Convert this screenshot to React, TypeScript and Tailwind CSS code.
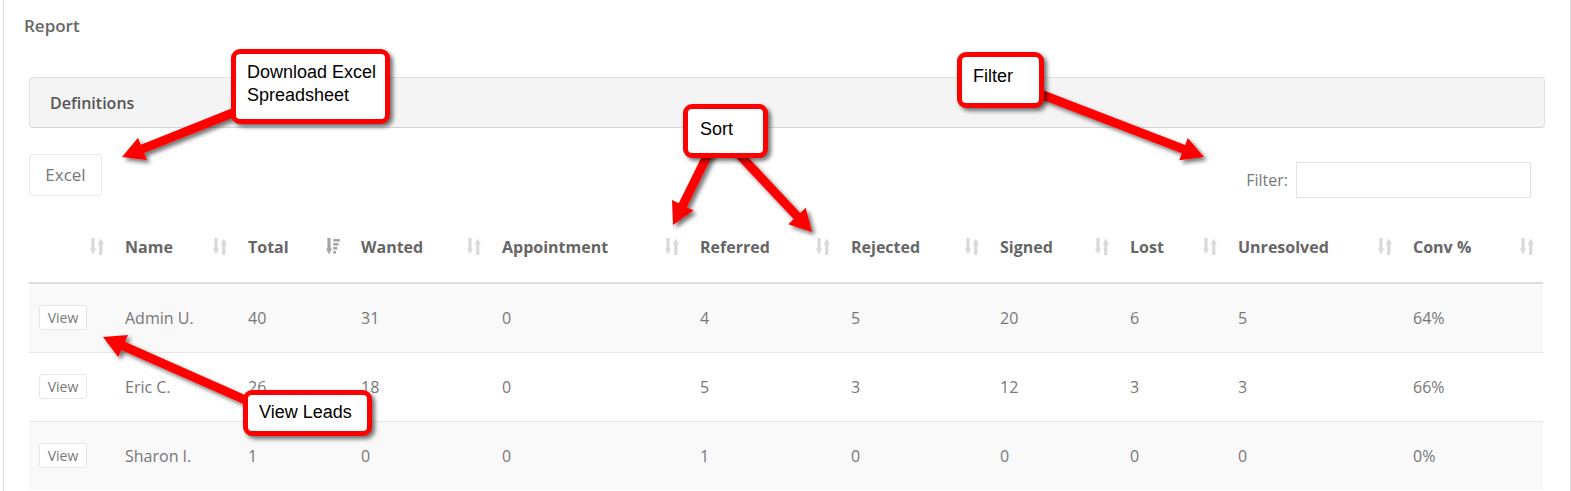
import React from 'react'

type Row = {
  name: string
  total: string
  wanted: string
  appointment: string
  referred: string
  rejected: string
  signed: string
  lost: string
  unresolved: string
  conv: string
}

const rows: Row[] = [
  { name: 'Admin U.', total: '40', wanted: '31', appointment: '0', referred: '4', rejected: '5', signed: '20', lost: '6', unresolved: '5', conv: '64%' },
  { name: 'Eric C.', total: '26', wanted: '18', appointment: '0', referred: '5', rejected: '3', signed: '12', lost: '3', unresolved: '3', conv: '66%' },
  { name: 'Sharon I.', total: '1', wanted: '0', appointment: '0', referred: '1', rejected: '0', signed: '0', lost: '0', unresolved: '0', conv: '0%' },
]

const columns: { label: string; key: keyof Row | null; width: string; active?: boolean }[] = [
  { label: '', key: null, width: 'w-[84px]' },
  { label: 'Name', key: 'name', width: 'w-[123px]' },
  { label: 'Total', key: 'total', width: 'w-[113px]', active: true },
  { label: 'Wanted', key: 'wanted', width: 'w-[141px]' },
  { label: 'Appointment', key: 'appointment', width: 'w-[198px]' },
  { label: 'Referred', key: 'referred', width: 'w-[151px]' },
  { label: 'Rejected', key: 'rejected', width: 'w-[149px]' },
  { label: 'Signed', key: 'signed', width: 'w-[130px]' },
  { label: 'Lost', key: 'lost', width: 'w-[108px]' },
  { label: 'Unresolved', key: 'unresolved', width: 'w-[175px]' },
  { label: 'Conv %', key: 'conv', width: 'w-[142px]' },
]

const SortIcon = ({ active }: { active?: boolean }) => {
  if (active) {
    return (
      <svg width="14" height="17" viewBox="0 0 14 17" className="shrink-0">
        <g fill="#a5a5a5">
          <rect x="1.4" y="0" width="3.2" height="11.5" />
          <polygon points="0,10.5 6,10.5 3,16.5" />
          <rect x="7.3" y="1" width="6.5" height="2.6" />
          <rect x="7.3" y="5" width="5.2" height="2.6" />
          <rect x="7.3" y="9" width="3.9" height="2.6" />
          <rect x="7.3" y="13" width="2.6" height="2.6" />
        </g>
      </svg>
    )
  }
  return (
    <svg width="14" height="17" viewBox="0 0 14 17" className="shrink-0">
      <g fill="#d9d9d9">
        <rect x="1.4" y="0" width="3.2" height="11.5" />
        <polygon points="0,10.5 6,10.5 3,16.5" />
        <polygon points="7.5,6.5 14,6.5 10.75,0.5" />
        <rect x="9.15" y="5.5" width="3.2" height="11.5" />
      </g>
    </svg>
  )
}

// callout arrows drawn on top of the screenshot
const arrowPoints = (x1: number, y1: number, x2: number, y2: number) => {
  const dx = x2 - x1
  const dy = y2 - y1
  const len = Math.hypot(dx, dy)
  const ux = dx / len
  const uy = dy / len
  const nx = -uy
  const ny = ux
  const w = 4.5
  const H = 12
  const L = 22
  const bx = x2 - ux * L
  const by = y2 - uy * L
  const pts = [
    [x1 + nx * w, y1 + ny * w],
    [bx + nx * w, by + ny * w],
    [bx + nx * H, by + ny * H],
    [x2, y2],
    [bx - nx * H, by - ny * H],
    [bx - nx * w, by - ny * w],
    [x1 - nx * w, y1 - ny * w],
  ]
  return pts.map((p) => `${p[0].toFixed(1)},${p[1].toFixed(1)}`).join(' ')
}

const arrows: [number, number, number, number][] = [
  [240, 110, 122, 157],
  [710, 150, 673, 225],
  [735, 150, 812, 232],
  [1035, 92, 1204, 157],
  [250, 402, 103, 337],
]

const Callout = ({ className, children }: { className: string; children: React.ReactNode }) => (
  <div
    className={`absolute rounded-[9px] border-[5px] border-[#ff0000] bg-white text-[18px] leading-[23px] text-black shadow-[3px_3px_4px_rgba(0,0,0,0.55)] ${className}`}
    style={{ fontFamily: '"Liberation Sans", Arial, sans-serif' }}
  >
    {children}
  </div>
)

export default function App() {
  return (
    <div className="relative h-[491px] w-[1571px] overflow-hidden bg-white" style={{ fontFamily: '"Open Sans", "Noto Sans", sans-serif' }}>
      <div className="ml-[3px] min-h-[491px] border-x border-[#dedede] bg-white">
        <h1 className="pl-[20px] pt-[15px] text-[17px] font-semibold leading-[22px] text-[#666]">Report</h1>

        <div className="px-[25px] pt-[40px]">
          <div className="flex h-[51px] items-center rounded-[4px] border border-[#e0e0e0] border-b-[#d4d4d4] bg-[#f4f4f4] px-[20px] text-[16px] font-semibold text-[#555]">
            Definitions
          </div>

          <div className="mt-[26px] flex items-start justify-between">
            <button
              type="button"
              className="h-[42px] w-[73px] rounded-[3px] border border-[#e6e6e6] bg-white text-[17px] text-[#777]"
            >
              Excel
            </button>
            <div className="mr-[14px] mt-[8px] flex items-center gap-[8px]">
              <span className="text-[16px] text-[#777]">Filter:</span>
              <input className="h-[36px] w-[235px] border border-[#e3e3e3] bg-white outline-none" />
            </div>
          </div>

          <table className="mt-[13px] w-[1514px] table-fixed border-collapse text-[16px]">
            <thead>
              <tr className="border-b-2 border-[#dddddd]">
                {columns.map((c, i) => (
                  <th key={i} className={`${c.width} h-[72px] p-0 text-left align-middle`}>
                    <div className="flex items-center justify-between pl-[12px] pr-[9px] font-bold text-[#666]">
                      <span>{c.label}</span>
                      <SortIcon active={c.active} />
                    </div>
                  </th>
                ))}
              </tr>
            </thead>
            <tbody>
              {rows.map((r, ri) => (
                <tr key={r.name} className={`h-[69px] border-t border-[#e6e6e6] ${ri % 2 === 0 ? 'bg-[#f9f9f9]' : 'bg-white'}`}>
                  <td className="pl-[10px] align-middle">
                    <button
                      type="button"
                      className="h-[25px] w-[48px] rounded-[3px] border border-[#e6e6e6] bg-white text-[14px] text-[#777]"
                    >
                      View
                    </button>
                  </td>
                  {columns.slice(1).map((c) => (
                    <td key={c.label} className="pl-[12px] align-middle text-[#777]">
                      {r[c.key as keyof Row]}
                    </td>
                  ))}
                </tr>
              ))}
            </tbody>
          </table>
        </div>
      </div>

      {/* annotation layer */}
      <svg className="pointer-events-none absolute inset-0" width="1571" height="491">
        <defs>
          <filter id="arrowShadow" x="-20%" y="-20%" width="140%" height="140%">
            <feDropShadow dx="3" dy="3" stdDeviation="2" floodColor="#000" floodOpacity="0.55" />
          </filter>
        </defs>
        {arrows.map((a, i) => (
          <polygon key={i} points={arrowPoints(a[0], a[1], a[2], a[3])} fill="#ff0000" filter="url(#arrowShadow)" />
        ))}
      </svg>

      <Callout className="left-[231px] top-[49px] h-[75px] w-[159px] pl-[11px] pt-[7px]">
        Download Excel
        <br />
        Spreadsheet
      </Callout>
      <Callout className="left-[683px] top-[104px] h-[54px] w-[85px] pl-[12px] pt-[9px]">Sort</Callout>
      <Callout className="left-[957px] top-[52px] h-[56px] w-[87px] pl-[11px] pt-[8px]">Filter</Callout>
      <Callout className="left-[243px] top-[390px] h-[46px] w-[129px] pl-[11px] pt-[6px]">View Leads</Callout>
    </div>
  )
}
